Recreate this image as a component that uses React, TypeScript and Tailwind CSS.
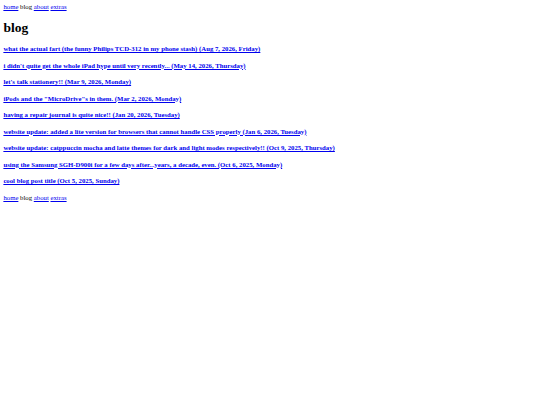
import React from 'react';

const posts = [
  'what the actual fart (the funny Philips TCD-312 in my phone stash) (Aug 7, 2026, Friday)',
  "i didn't quite get the whole iPad hype until very recently... (May 14, 2026, Thursday)",
  "let's talk stationery!! (Mar 9, 2026, Monday)",
  'iPods and the "MicroDrive"s in them. (Mar 2, 2026, Monday)',
  'having a repair journal is quite nice!! (Jan 20, 2026, Tuesday)',
  'website update: added a lite version for browsers that cannot handle CSS properly (Jan 6, 2026, Tuesday)',
  'website update: catppuccin mocha and latte themes for dark and light modes respectively!! (Oct 9, 2025, Thursday)',
  'using the Samsung SGH-D900i for a few days after...years, a decade, even. (Oct 6, 2025, Monday)',
  'cool blog post title (Oct 5, 2025, Sunday)',
];

const Nav = () => (
  <nav className="leading-[8px]">
    <a href="#" className="text-[#0000ee] underline">home</a> blog{' '}
    <a href="#" className="text-[#0000ee] underline">about</a>{' '}
    <a href="#" className="text-[#0000ee] underline">extras</a>
  </nav>
);

export default function App() {
  return (
    <div className="min-h-[405px] bg-white p-[3.375px] font-['Liberation_Serif',serif] text-[6.75px] text-black">
      <Nav />
      <h1 className="my-[9px] text-[13.5px] font-bold leading-[16px]">blog</h1>
      {posts.map((p) => (
        <h4 key={p} className="my-[8.9px] text-[6.75px] font-bold leading-[7.6px]">
          <a href="#" className="text-[#0000ee] underline">{p}</a>
        </h4>
      ))}
      <Nav />
    </div>
  );
}
